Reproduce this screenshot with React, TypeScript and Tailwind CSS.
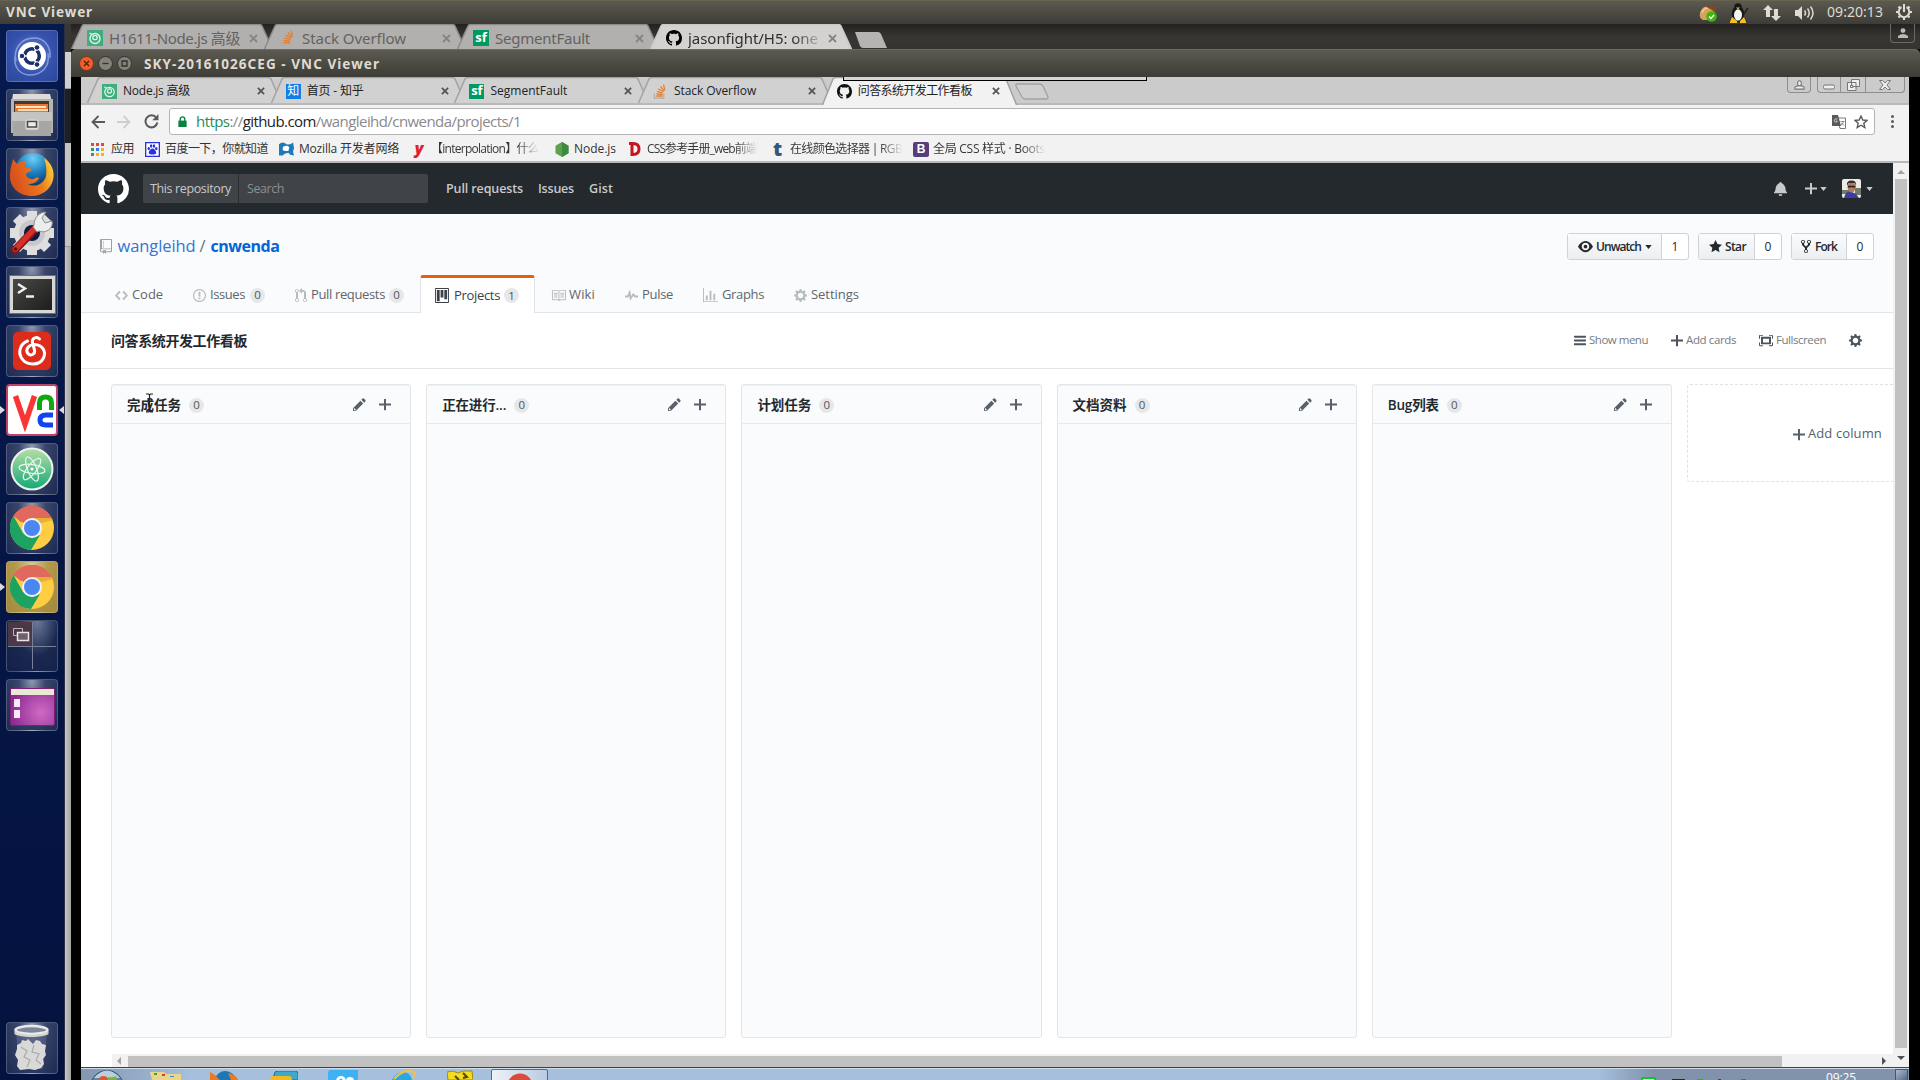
import { useLayoutEffect, useRef, type ReactNode } from "react";

const OCT = {
  github: "M8 0C3.58 0 0 3.58 0 8c0 3.54 2.29 6.53 5.47 7.59.4.07.55-.17.55-.38 0-.19-.01-.82-.01-1.49-2.01.37-2.53-.49-2.69-.94-.09-.23-.48-.94-.82-1.13-.28-.15-.68-.52-.01-.53.63-.01 1.08.58 1.23.82.72 1.21 1.87.87 2.33.66.07-.52.28-.87.51-1.07-1.78-.2-3.64-.89-3.64-3.95 0-.87.31-1.59.82-2.15-.08-.2-.36-1.02.08-2.12 0 0 .67-.21 2.2.82.64-.18 1.32-.27 2-.27.68 0 1.36.09 2 .27 1.53-1.04 2.2-.82 2.2-.82.44 1.1.16 1.92.08 2.12.51.56.82 1.27.82 2.15 0 3.07-1.87 3.75-3.65 3.95.29.25.54.73.54 1.48 0 1.07-.01 1.93-.01 2.2 0 .21.15.46.55.38A8.013 8.013 0 0 0 16 8c0-4.42-3.58-8-8-8z",
  repo: "M4 9H3V8h1v1zm0-3H3v1h1V6zm0-2H3v1h1V4zm0-2H3v1h1V2zm8-1v12c0 .55-.45 1-1 1H6v2l-1.5-1.5L3 16v-2H1c-.55 0-1-.45-1-1V1c0-.55.45-1 1-1h10c.55 0 1 .45 1 1zm-1 10H1v2h2v-1h3v1h5v-2zm0-10H2v9h9V1z",
  code: "M9.5 3L8 4.5 11.5 8 8 11.5 9.5 13 14 8 9.5 3zm-5 0L0 8l4.5 5L6 11.5 2.5 8 6 4.5 4.5 3z",
  issue: "M7 2.3c3.14 0 5.7 2.56 5.7 5.7s-2.56 5.7-5.7 5.7A5.71 5.71 0 0 1 1.3 8c0-3.14 2.56-5.7 5.7-5.7zM7 1C3.14 1 0 4.14 0 8s3.14 7 7 7 7-3.14 7-7-3.14-7-7-7zm1 3H6v5h2V4zm0 6H6v2h2v-2z",
  pr: "M11 11.28V5c-.03-.78-.34-1.47-.94-2.06C9.46 2.35 8.78 2.03 8 2H7V0L4 3l3 3V4h1c.27.02.48.11.69.31.21.2.3.42.31.69v6.28A1.993 1.993 0 0 0 10 15a1.993 1.993 0 0 0 1-3.72zm-1 2.92c-.66 0-1.2-.55-1.2-1.2 0-.65.55-1.2 1.2-1.2.65 0 1.2.55 1.2 1.2 0 .65-.55 1.2-1.2 1.2zM4 3c0-1.11-.89-2-2-2a1.993 1.993 0 0 0-1 3.72v6.56A1.993 1.993 0 0 0 2 15a1.993 1.993 0 0 0 1-3.72V4.72c.59-.34 1-.98 1-1.72zm-.8 10c0 .66-.55 1.2-1.2 1.2-.65 0-1.2-.55-1.2-1.2 0-.65.55-1.2 1.2-1.2.65 0 1.2.55 1.2 1.2zM2 4.2C1.34 4.2.8 3.65.8 3c0-.65.55-1.2 1.2-1.2.65 0 1.2.55 1.2 1.2 0 .65-.55 1.2-1.2 1.2z",
  project: "M10 12h3V2h-3v10zm-4-2h3V2H6v8zm-4 4h3V2H2v12zm-1 1h13V1H1v14zM14 0H1a1 1 0 0 0-1 1v14a1 1 0 0 0 1 1h13a1 1 0 0 0 1-1V1a1 1 0 0 0-1-1z",
  book: "M3 5h4v1H3V5zm0 3h4V7H3v1zm0 2h4V9H3v1zm11-5h-4v1h4V5zm0 2h-4v1h4V7zm0 2h-4v1h4V9zm2-6v9c0 .55-.45 1-1 1H9.5l-1 1-1-1H2c-.55 0-1-.45-1-1V3c0-.55.45-1 1-1h5.5l1 1 1-1H15c.55 0 1 .45 1 1zm-8 .5L7.5 3H2v9h6V3.5zm7-.5H9.5l-.5.5V12h6V3z",
  pulse: "M11.5 8L8.8 5.4 6.6 8.5 5.5 1.6 2.38 8H0v2h3.6l.9-1.8.9 5.4L9 8.5l1.6 1.5H14V8h-2.5z",
  graph: "M16 14v1H0V0h1v14h15zM5 13H3V8h2v5zm4 0H7V3h2v10zm4 0h-2V6h2v7z",
  gear: "M14 8.77v-1.6l-1.94-.64-.45-1.09.88-1.84-1.13-1.13-1.81.91-1.09-.45-.69-1.92h-1.6l-.63 1.94-1.11.45-1.84-.88-1.13 1.13.91 1.81-.45 1.09L0 7.23v1.59l1.94.64.45 1.09-.88 1.84 1.13 1.13 1.81-.91 1.09.45.69 1.92h1.59l.63-1.94 1.11-.45 1.84.88 1.13-1.13-.92-1.81.47-1.09L14 8.75v.02zM7 11c-1.66 0-3-1.34-3-3s1.34-3 3-3 3 1.34 3 3-1.34 3-3 3z",
  pencil: "M0 12v3h3l8-8-3-3-8 8zm3 2H1v-2h1v1h1v1zm10.3-9.3L12 6 9 3l1.3-1.3a.996.996 0 0 1 1.41 0l1.59 1.59c.39.39.39 1.02 0 1.41z",
  plus: "M12 9H7v5H5V9H0V7h5V2h2v5h5v2z",
  bars: "M11.41 9H.59C0 9 0 8.59 0 8c0-.59 0-1 .59-1H11.4c.59 0 .59.41.59 1 0 .59 0 1-.59 1h.01zm0-4H.59C0 5 0 4.59 0 4c0-.59 0-1 .59-1H11.4c.59 0 .59.41.59 1 0 .59 0 1-.59 1h.01zM.59 11H11.4c.59 0 .59.41.59 1 0 .59 0 1-.59 1H.59C0 13 0 12.59 0 12c0-.59 0-1 .59-1z",
  full: "M13 10h1v3c0 .547-.453 1-1 1h-3v-1h3v-3zM1 10H0v3c0 .547.453 1 1 1h3v-1H1v-3zm0-7h3V2H1c-.547 0-1 .453-1 1v3h1V3zm1 1h10v8H2V4zm2 6h6V6H4v4zm6-8v1h3v3h1V3c0-.547-.453-1-1-1h-3z",
  eye: "M8.06 2C3 2 0 8 0 8s3 6 8.06 6C13 14 16 8 16 8s-3-6-7.94-6zM8 12c-2.2 0-4-1.78-4-4 0-2.2 1.8-4 4-4 2.22 0 4 1.8 4 4 0 2.22-1.78 4-4 4zm2-4c0 1.11-.89 2-2 2-1.11 0-2-.89-2-2 0-1.11.89-2 2-2 1.11 0 2 .89 2 2z",
  star: "M14 6l-4.9-.64L7 1 4.9 5.36 0 6l3.6 3.26L2.67 14 7 11.67 11.33 14l-.93-4.74L14 6z",
  fork: "M8 1a1.993 1.993 0 0 0-1 3.72V6L5 8 3 6V4.72A1.993 1.993 0 0 0 2 1a1.993 1.993 0 0 0-1 3.72V6.5l3 3v1.78A1.993 1.993 0 0 0 5 15a1.993 1.993 0 0 0 1-3.72V9.5l3-3V4.72A1.993 1.993 0 0 0 8 1zM2 4.2C1.34 4.2.8 3.65.8 3c0-.65.55-1.2 1.2-1.2.65 0 1.2.55 1.2 1.2 0 .65-.55 1.2-1.2 1.2zm3 10c-.66 0-1.2-.55-1.2-1.2 0-.65.55-1.2 1.2-1.2.65 0 1.2.55 1.2 1.2 0 .65-.55 1.2-1.2 1.2zm3-10c-.66 0-1.2-.55-1.2-1.2 0-.65.55-1.2 1.2-1.2.65 0 1.2.55 1.2 1.2 0 .65-.55 1.2-1.2 1.2z",
  bell: "M14 12v1H0v-1l.73-.58c.77-.77.81-2.55 1.19-4.42C2.69 3.23 6 2 6 2c0-.55.45-1 1-1s1 .45 1 1c0 0 3.39 1.23 4.16 5 .38 1.88.42 3.66 1.19 4.42l.66.58H14zm-7 4c1.11 0 2-.89 2-2H5c0 1.11.89 2 2 2z",
};

function Oct({ name, vw = 16, className }: { name: keyof typeof OCT; vw?: number; className: string }) {
  return (
    <svg viewBox={`0 0 ${vw} 16`} preserveAspectRatio="none" className={`shrink-0 fill-current ${className}`}>
      <path d={OCT[name]} fillRule="evenodd" />
    </svg>
  );
}

/* Text that spaces its letters so that the line takes exactly the width of its box. */
function Fit({ className, children }: { className: string; children: ReactNode }) {
  const ref = useRef<HTMLSpanElement>(null);
  useLayoutEffect(() => {
    const el = ref.current;
    const box = el?.parentElement;
    if (!el || !box) return;
    el.style.letterSpacing = "0px";
    const n = (el.textContent || "").length;
    const gap = (box.getBoundingClientRect().width - el.getBoundingClientRect().width) / n;
    el.style.letterSpacing = `${gap}px`;
  }, []);
  return (
    <span className={`block shrink-0 whitespace-nowrap ${className}`}>
      <span ref={ref} className="inline-block">
        {children}
      </span>
    </span>
  );
}

const Caret = ({ className }: { className: string }) => (
  <svg viewBox="0 0 8 5" className={`shrink-0 fill-current ${className}`}>
    <path d="M0 0h8L4 5z" />
  </svg>
);

/* ---------- favicons ---------- */

const NodeClub = ({ className }: { className: string }) => (
  <svg viewBox="0 0 16 16" className={`shrink-0 ${className}`}>
    <path fill="#3fae7c" d="M0 0h16v16H0z" />
    <circle cx="8" cy="8.500" r="5" fill="none" stroke="#dff3ea" strokeWidth="1.400" />
    <circle cx="8" cy="7.500" r="2.200" fill="none" stroke="#dff3ea" strokeWidth="1.300" />
    <path d="M2.500 3l2.500 1.500" stroke="#dff3ea" strokeWidth="1.200" />
  </svg>
);
const StackO = ({ className }: { className: string }) => (
  <svg viewBox="0 0 16 16" className={`shrink-0 ${className}`} fill="none">
    <path d="M1.500 10.500V15h10v-4.500" stroke="#b9a89a" strokeWidth="1.300" />
    <path d="M3.500 12.800h6.500M3.600 10.500l6.500.7M4.200 7.900l6.200 1.800M5.600 5.100l5.500 3.200M8 2.500l3.900 5M11.200.7l1.400 6" stroke="#e8802f" strokeWidth="1.400" />
  </svg>
);
const Sf = ({ className }: { className: string }) => (
  <span className={`flex shrink-0 items-center justify-center bg-[#009a61] font-['Open_Sans',sans-serif] text-[13px] leading-none font-bold text-white ${className}`}>
    <span className="-mt-px">sf</span>
  </span>
);

/* ---------- host desktop ---------- */

const BAR = "bg-linear-to-b from-[#5c5a50] to-[#3d3c37]";

function TopPanel() {
  return (
    <header className={`flex h-6 shrink-0 items-center border-t border-[#66644f] pl-[6px] ${BAR}`}>
      <Fit className="w-[87px] text-[13.500px] font-bold text-[#dfdbd2]">VNC Viewer</Fit>
      <div className="ml-auto flex items-center pr-[7px] text-[#dfdbd2]">
        <svg viewBox="0 0 20 18" className="mr-[11px] h-[18px] w-5">
          <path d="M2 9c1-4 4-7 8-7s7 3 7 7-2 7-7 7H5c-2-1-4-3-3-7z" fill="#d9a25c" />
          <path d="M4 9c1-3 3-5 6-5" fill="none" stroke="#f2cf97" strokeWidth="1.500" />
          <path d="M6 2c3-2 9-2 12 3l-1 4C15 6 11 4 6 2z" fill="#7b4b25" />
          <path d="M16 3l2.500-2" stroke="#7b4b25" strokeWidth="1.500" />
          <circle cx="13.500" cy="12.500" r="5.300" fill="#43b310" />
          <path d="M11 12.500l2 2 3-3.500" fill="none" stroke="#fff" strokeWidth="1.500" />
        </svg>
        <svg viewBox="0 0 20 20" className="mr-[14px] h-5 w-5">
          <ellipse cx="9" cy="11" rx="6.200" ry="8" fill="#16181c" />
          <circle cx="9" cy="4" r="3.800" fill="#16181c" />
          <ellipse cx="9" cy="12" rx="4" ry="5.800" fill="#f4f4f4" />
          <path d="M7 4.500h4L9 6.500z" fill="#f6b90e" />
          <path d="M1 19l2-5 5 4v2H1zM17 19l-2-5-4 4v2h6z" fill="#f8c21a" />
          <path d="M14 12l5-7" stroke="#222" strokeWidth="1.600" />
        </svg>
        <svg viewBox="0 0 18 18" className="mr-[14px] h-[18px] w-[18px] fill-current">
          <path d="M5 1l5 5H7v7H3V6H0zM13 17l-5-5h3V5h4v7h3z" />
        </svg>
        <svg viewBox="0 0 20 16" className="mr-3 h-4 w-5" fill="none" stroke="currentColor">
          <path d="M0 5h3l4-4v14l-4-4H0z" fill="currentColor" stroke="none" />
          <path d="M9.500 5.500q2 2.500 0 5M12.500 3.500q3.500 4.500 0 9M15.500 1.500q5 6.500 0 13" strokeWidth="1.500" />
        </svg>
        <Fit className="mb-[2px] w-14 text-[14px] leading-[22px]">09:20:13</Fit>
        <svg viewBox="0 0 18 18" className="mb-px ml-3 h-[18px] w-[18px]" fill="none" stroke="currentColor">
          <path d="M6.500 4.200a5.300 5.300 0 1 0 5 0" strokeWidth="2" />
          <path d="M9 1v8" strokeWidth="2" />
          <path d="M3.500 3.500l1.700 1.700M14.500 3.500l-1.700 1.700M1 9h2.500M17 9h-2.500M3.500 14.500l1.600-1.600M14.500 14.500l-1.600-1.600M9 17v-2.500" strokeWidth="2.200" />
        </svg>
      </div>
    </header>
  );
}

const gloss = "bg-[radial-gradient(ellipse_at_50%_0%,#8f98ae_0%,#39456b_38%,#1d2b52_100%)]";

function Tile({ children, className = gloss, left, right }: { children: ReactNode; className?: string; left?: boolean; right?: boolean }) {
  return (
    <div className="relative flex h-[52px] w-full shrink-0 justify-center">
      {left && <i className="absolute top-[22px] left-0 border-y-[4px] border-l-[5px] border-y-transparent border-l-[#d8dae2]" />}
      {right && <i className="absolute top-[22px] right-0 border-y-[4px] border-r-[5px] border-y-transparent border-r-[#d8dae2]" />}
      <div className={`flex h-[52px] w-[52px] items-center justify-center overflow-hidden rounded-[4px] border border-white/20 ${className}`}>{children}</div>
    </div>
  );
}

const Chrome = () => (
  <svg viewBox="0 0 44 44" className="h-11 w-11">
    <circle cx="22" cy="22" r="22" fill="#ffcd42" />
    <path d="M22 22L3.500 10A22 22 0 0 1 41.500 12H22z" fill="#dd5144" />
    <path d="M22 0A22 22 0 0 1 41.500 12H22L11 16 3.500 10A22 22 0 0 1 22 0z" fill="#e0685d" />
    <path d="M3.500 10L13 27l9 5 8-3-9 15A22 22 0 0 1 3.500 10z" fill="#1da261" />
    <path d="M22 12h20l1 2-12 3z" fill="#c9952c" opacity=".5" />
    <circle cx="22" cy="22" r="10" fill="#f1f1f1" />
    <circle cx="22" cy="22" r="8" fill="#4b87f3" />
  </svg>
);

const Firefox = ({ className }: { className: string }) => (
  <svg viewBox="0 0 46 46" className={className}>
    <defs>
      <radialGradient id="ffglobe" cx=".5" cy=".15" r=".8">
        <stop offset="0" stopColor="#6fd0f4" />
        <stop offset=".5" stopColor="#1f7fc0" />
        <stop offset="1" stopColor="#08335f" />
      </radialGradient>
      <linearGradient id="fffox" x1="0" x2="1" y1=".3" y2="0">
        <stop offset="0" stopColor="#d8501c" />
        <stop offset=".55" stopColor="#ee7a1f" />
        <stop offset="1" stopColor="#fbe23c" />
      </linearGradient>
    </defs>
    <circle cx="24" cy="20" r="18" fill="url(#ffglobe)" />
    <path d="M4 8l4 5c3-3 7-4 10-3-2 2-3 4-2 6 3 0 5 1 7 3-2 2-5 2-6 4 0 3 3 5 7 5 2 0 4-3 6-1-2 5-7 6-11 6 7 4 16 0 18-8 1-6 0-12-2-18 8 5 11 14 9 22-2 9-11 16-21 16C10 45 0 36 1 23 1 17 3 13 4 8z" fill="url(#fffox)" />
  </svg>
);

function Launcher() {
  return (
    <aside className="flex w-[65px] shrink-0 flex-col gap-[7px] border-r border-[#2a2f45] bg-[#061543] bg-linear-to-b from-[#071a4d] to-[#04123f] pt-[6px] pb-[6px]">
      <Tile className="bg-[radial-gradient(circle_at_50%_45%,#6f88d4_0%,#3552ae_55%,#2c4698_100%)]">
        <svg viewBox="0 0 50 50" className="h-[50px] w-[50px]" fill="none">
          <path d="M9 30C6 18 14 7 27 7c10 0 17 8 16 20M41 22c2 14-6 22-19 22C12 43 7 36 8 26" stroke="#a9b9e8" strokeWidth="1.500" opacity=".7" />
          <circle cx="25" cy="25" r="14" fill="#fff" />
          <circle cx="25" cy="25" r="7.300" stroke="#1b2f6b" strokeWidth="3.600" />
          <path d="M25 25l-12 0M25 25l6-10M25 25l6 10" stroke="#fff" strokeWidth="1.500" />
          <circle cx="25" cy="25" r="5" fill="#fff" />
          <circle cx="15" cy="25" r="2.800" fill="#1b2f6b" stroke="#fff" />
          <circle cx="30" cy="16.500" r="2.800" fill="#1b2f6b" stroke="#fff" />
          <circle cx="30" cy="33.500" r="2.800" fill="#1b2f6b" stroke="#fff" />
        </svg>
      </Tile>
      <Tile>
        <svg viewBox="0 0 50 50" className="h-[50px] w-[50px]">
          <path d="M6 4h37l3 12H4z" fill="#dcdcda" />
          <path d="M4 9h42v34H4z" fill="#b4b4b2" />
          <path d="M7 11h35v13H7z" fill="#46362d" />
          <path d="M8 14h33v8H8z" fill="#e8772e" />
          <path d="M9 16h30v2H9z" fill="#fbe3c8" />
          <path d="M11 19h30v2H11z" fill="#fbd9b5" />
          <path d="M5 22h40l-1 24H6z" fill="#a6a6a4" />
          <path d="M5 22h40v9H5z" fill="#c4c4c2" />
          <rect x="18.500" y="29.500" width="13" height="10" rx="2" fill="#dcdcda" stroke="#cfcfcd" />
          <path d="M20.500 31.500h9v5.500h-9z" fill="#eee" stroke="#4b4b4b" strokeWidth="1.600" />
        </svg>
      </Tile>
      <Tile>
        <Firefox className="h-[46px] w-[46px]" />
      </Tile>
      <Tile>
        <svg viewBox="0 0 50 50" className="h-[50px] w-[50px]">
          <g fill="#dedede">
            <circle cx="25" cy="25" r="18" />
            <path d="M20 3h10v44H20zM3 20h44v10H3z" />
            <path d="M20 3h10v44H20zM3 20h44v10H3z" transform="rotate(45 25 25)" />
          </g>
          <circle cx="25" cy="25" r="13" fill="#c6c8ca" />
          <circle cx="25" cy="25" r="8" fill="#0a1a48" />
          <path d="M8 42L29 20" stroke="#8e1512" strokeWidth="8" strokeLinecap="round" />
          <path d="M8.500 41L28.500 19.500" stroke="#d3312b" strokeWidth="5.500" strokeLinecap="round" />
          <path d="M27 17c0-7 5-13 12-13l-4 6 3 5 7-2c2 7-6 13-13 10l-2 1-4-5z" fill="#eceded" stroke="#8e8e8e" />
          <circle cx="8.500" cy="41" r="1.800" fill="#5f0d0b" />
        </svg>
      </Tile>
      <Tile>
        <div className="mt-[5px] flex h-[37px] w-[45px] items-start border-[3px] border-[#d7d7d5] bg-linear-to-br from-[#4a4a48] to-[#1d1d1c] outline-1 outline-[#6d6d6d]">
          <svg viewBox="0 0 39 31" className="h-[31px] w-[39px]" fill="none" stroke="#eee" strokeWidth="2.500">
            <path d="M5 5l7 4.500L5 14M13 17.500h8" />
          </svg>
        </div>
      </Tile>
      <Tile>
        <div className="flex h-[38px] w-[38px] items-center justify-center rounded-[5px] bg-[#dd2b1c]">
          <svg viewBox="0 0 38 38" className="h-[38px] w-[38px]" fill="none" stroke="#fff" strokeWidth="3" strokeLinecap="round">
            <path d="M14.500 9C7 12 5 20 8.500 26c5 8 18 8 22 0 3-7-1-13-9-13.500-6 0-9 5-7 8.500 3 4 8 1 7-3L19.500 11c-1-5 4-7 7-4" />
          </svg>
        </div>
      </Tile>
      <Tile left right className="border-[2px]! border-[#c0446a]! bg-white">
        <svg viewBox="0 0 48 48" className="h-12 w-12" fill="none">
          <path d="M7.500 10l9.500 28 9.500-28" stroke="#fb3434" strokeWidth="5.500" />
          <path d="M31.500 24V17q0-6 6-6t6 6v7" stroke="#0fa80f" strokeWidth="5" />
          <path d="M45 29h-7q-6 0-6 5t6 5h7" stroke="#0d45f2" strokeWidth="5" />
        </svg>
      </Tile>
      <Tile>
        <svg viewBox="0 0 44 44" className="h-11 w-11" fill="none">
          <defs>
            <linearGradient id="atom" x2="0" y2="1">
              <stop stopColor="#b6dfa6" />
              <stop offset="1" stopColor="#12a877" />
            </linearGradient>
          </defs>
          <circle cx="22" cy="22" r="20.500" fill="url(#atom)" stroke="#eef1ee" strokeWidth="2" />
          <g stroke="#e9f7ec" strokeWidth="1.200">
            <ellipse cx="22" cy="22" rx="13" ry="4.500" transform="rotate(8 22 22)" />
            <ellipse cx="22" cy="22" rx="13" ry="4.500" transform="rotate(68 22 22)" />
            <ellipse cx="22" cy="22" rx="13" ry="4.500" transform="rotate(128 22 22)" />
          </g>
          <circle cx="22" cy="22" r="1.600" fill="#fff" />
        </svg>
      </Tile>
      <Tile>
        <Chrome />
      </Tile>
      <Tile left className="bg-[radial-gradient(ellipse_at_50%_0%,#d3c894_0%,#b49a4c_45%,#a4893c_100%)]">
        <Chrome />
      </Tile>
      <Tile className="bg-[radial-gradient(ellipse_at_60%_0%,#6f7a99_0%,#1a2850_50%,#132047_100%)]">
        <svg viewBox="0 0 50 50" className="h-[50px] w-[50px]" fill="none">
          <path d="M1 1h24v24H1z" fill="#4a3848" />
          <path d="M25.500 1v47M1 25.500h48" stroke="#7a8098" />
          <path d="M6.500 7.500h9v7h-9z" stroke="#b9b2b8" />
          <path d="M10.500 11.500h11v8h-11z" fill="#6f5f6c" stroke="#e8e4e8" strokeWidth="1.500" />
        </svg>
      </Tile>
      <Tile>
        <div className="mt-[4px] h-[38px] w-[45px] rounded-[2px] border border-[#7b1f78] bg-[radial-gradient(circle_at_70%_65%,#cf6bc4,#8c2a92_80%)]">
          <div className="h-[6px] bg-[#e9e8d2]" />
          <div className="mt-1 ml-[3px] flex flex-col gap-[3px]">
            <i className="h-2 w-[6px] bg-white/90" />
            <i className="h-2 w-[6px] bg-white/90" />
          </div>
        </div>
      </Tile>
      <div className="mt-auto">
        <Tile>
          <svg viewBox="0 0 50 50" className="h-[50px] w-[50px]">
            <path d="M9 10l4 36h23l4-36z" fill="#5b678a" opacity=".6" />
            <path d="M10 22l4-2 1-3 4 1 2-2 3 3 2 2 3-4 4 1 2 3 4 1-1 6 1 4-3 4 1 5-3 4-6 2-6-1-9 1-3-4 1-6-3-5 2-6z" fill="#d9d9d9" />
            <path d="M14 24l6 4-3 6 6 3-3 7M27 22l-2 7 7 2-3 6 5 4" fill="none" stroke="#aaa" strokeWidth="1.200" />
            <ellipse cx="24.500" cy="7" rx="16" ry="4" fill="#7d859c" stroke="#e9e9e6" strokeWidth="2.500" />
            <path d="M7.500 8c4 5 30 5 34 0v3c-5 4-29 4-34 0z" fill="#d4d4d1" />
          </svg>
        </Tile>
      </div>
    </aside>
  );
}

/* A browser tab's slanted outline, drawn behind its caption. */
function TabShape({ fill, line, w, h, slant }: { fill: string; line: string; w: number; h: number; slant: number }) {
  return (
    <svg viewBox={`0 0 ${w} ${h}`} className="absolute inset-0 h-full w-full" preserveAspectRatio="none">
      <path d={`M0 ${h + 1}L${slant} 2q1-1.500 3-1.500H${w - slant - 3}q2 0 3 1.500L${w} ${h + 1}`} fill={fill} stroke={line} strokeWidth="1.500" />
    </svg>
  );
}

function HostTab({ icon, title, fit, active }: { icon: ReactNode; title: string; fit: string; active?: boolean }) {
  return (
    <div className={`relative -mr-[9px] flex h-[25px] w-[202px] shrink-0 items-center ${active ? "z-10 text-[#3b3a38]" : "text-[#636260]"}`}>
      <TabShape fill={active ? "#d3d2d0" : "#b1b0ae"} line={active ? "#c9c8c6" : "#8c8b89"} w={202} h={25} slant={11} />
      <div className="relative flex w-full items-center pt-[3px] pl-4">
        {icon}
        <Fit className={`ml-[6px] text-[15px] leading-5 ${fit}`}>{title}</Fit>
        <svg viewBox="0 0 9 9" className="mr-[15px] ml-auto h-[9px] w-[9px] stroke-[#858482]" strokeWidth="1.800">
          <path d="M1 1l7 7M8 1L1 8" />
        </svg>
      </div>
    </div>
  );
}

function HostTabs() {
  return (
    <div className="flex h-[25px] shrink-0 bg-linear-to-b from-[#232220] via-[#373632] to-[#353430]">
      <HostTab icon={<NodeClub className="h-4 w-4" />} title="H1611-Node.js 高级" fit="w-[131px]" />
      <HostTab icon={<StackO className="h-4 w-4" />} title="Stack Overflow" fit="w-[104px]" />
      <HostTab icon={<Sf className="h-4 w-4" />} title="SegmentFault" fit="w-[95px]" />
      <HostTab active icon={<Oct name="github" className="h-4 w-4 text-black" />} title="jasonfight/H5: one" fit="w-[130px] bg-linear-to-r from-[#2b2b2b] from-80% to-[#aaa] bg-clip-text text-transparent" />
      <svg viewBox="0 0 33 16" className="mt-2 ml-[11px] h-4 w-[33px]">
        <path d="M1 0h23q2 0 3 2l6 14H9q-2 0-3-2z" fill="#b5b4b2" />
      </svg>
      <div className="mr-[5px] ml-auto flex h-[19px] w-[25px] items-center justify-center rounded-b-[4px] border border-t-0 border-[#6a6964]">
        <svg viewBox="0 0 10 10" className="h-[10px] w-[10px] fill-[#bcbbb9]">
          <circle cx="5" cy="2.600" r="2.400" />
          <path d="M0 10V8q5-4 10 0v2z" />
        </svg>
      </div>
    </div>
  );
}

function VncTitle() {
  return (
    <div className={`flex h-7 shrink-0 items-center gap-[4px] rounded-t-[5px] border-t border-[#6b6a60] pl-[8px] ${BAR}`}>
      <svg viewBox="0 0 15 15" className="h-[15px] w-[15px]">
        <circle cx="7.500" cy="7.500" r="7" fill="#ee5f2c" stroke="#7e3319" />
        <path d="M5 5l5 5M10 5l-5 5" stroke="#4b2110" strokeWidth="1.300" />
      </svg>
      <svg viewBox="0 0 15 15" className="h-[15px] w-[15px]">
        <circle cx="7.500" cy="7.500" r="7" fill="#84827a" stroke="#33322e" />
        <path d="M4.500 7.500h6" stroke="#33322e" strokeWidth="1.300" />
      </svg>
      <svg viewBox="0 0 15 15" className="h-[15px] w-[15px]">
        <circle cx="7.500" cy="7.500" r="7" fill="#84827a" stroke="#33322e" />
        <path d="M5 5h5v5H5z" fill="none" stroke="#33322e" strokeWidth="1.300" />
      </svg>
      <Fit className="mt-[2px] ml-[8px] w-[236px] text-[13.500px] font-bold text-[#dfdbd2]">SKY-20161026CEG - VNC Viewer</Fit>
    </div>
  );
}

/* ---------- remote browser ---------- */

function RemoteTab({ icon, title, fit, active }: { icon: ReactNode; title: string; fit: string; active?: boolean }) {
  return (
    <div className={`relative mr-[-11.300px] flex h-[26px] w-[195px] shrink-0 items-center text-[#222] ${active ? "z-10 h-7!" : ""}`}>
      <TabShape fill={active ? "#f2f2f2" : "#d1d1d1"} line="#a2a2a2" w={195} h={active ? 28 : 26} slant={11} />
      <div className={`relative flex w-full items-center pl-[15px] ${active ? "" : "pt-[2px]"}`}>
        {icon}
        <Fit className={`ml-[6px] text-[12px] leading-5 ${fit}`}>{title}</Fit>
        <svg viewBox="0 0 9 9" className="mr-[17px] ml-auto h-2 w-2 stroke-[#555]" strokeWidth="2">
          <path d="M1 1l7 7M8 1L1 8" />
        </svg>
      </div>
    </div>
  );
}

const WinBtn = ({ className, children }: { className: string; children: ReactNode }) => (
  <span className={`flex h-4 items-center justify-center border-[#8e8e8e] ${className}`}>{children}</span>
);

function RemoteTabs() {
  return (
    <div className="relative flex h-7 shrink-0 bg-[#cbcbcb] pl-[6px] shadow-[inset_0_-2px_0_#b9b9b9]">
      <RemoteTab icon={<NodeClub className="h-[15px] w-[15px]" />} title="Node.js 高级" fit="w-[67px]" />
      <RemoteTab
        icon={<span className="flex h-[15px] w-[15px] shrink-0 items-center justify-center bg-[#0f7fe6] text-[12px] leading-none text-white">知</span>}
        title="首页 - 知乎"
        fit="w-[57px]"
      />
      <RemoteTab icon={<Sf className="h-[15px] w-[15px]" />} title="SegmentFault" fit="w-[77px]" />
      <RemoteTab icon={<StackO className="h-[15px] w-[15px]" />} title="Stack Overflow" fit="w-[82px]" />
      <RemoteTab active icon={<Oct name="github" className="h-[15px] w-[15px] text-[#111]" />} title="问答系统开发工作看板" fit="w-[114px]" />
      <svg viewBox="0 0 34 17" className="mt-[6px] ml-[9px] h-[17px] w-[34px]">
        <path d="M2 1h22q3 0 4 2l5 11q0 2-2 2H10q-2 0-3-2L1 3q-.5-2 1-2z" fill="#cfcfcf" stroke="#a2a2a2" strokeWidth="1.300" />
      </svg>
      <div className="absolute top-0 left-[762px] z-20 h-1 w-[304px] border border-t-0 border-black bg-[#d6d6d6]" />
      <div className="mr-1 ml-auto flex">
        <WinBtn className="mr-[6px] w-6 rounded-b-[4px] border-x border-b">
          <svg viewBox="0 0 12 12" className="h-[11px] w-[11px] fill-[#eee] stroke-[#777]" strokeWidth="1.200">
            <path d="M1 11V9l2.500-1.500h5L11 9v2zM4 4.500a2 2.600 0 0 1 4 0q0 3-2 3t-2-3z" />
          </svg>
        </WinBtn>
        <WinBtn className="w-6 rounded-bl-[4px] border-x border-b">
          <svg viewBox="0 0 12 6" className="mt-1 h-[6px] w-3 fill-[#eee] stroke-[#777]">
            <rect x=".5" y="1" width="11" height="4" rx="1.500" />
          </svg>
        </WinBtn>
        <WinBtn className="w-6 border-b">
          <svg viewBox="0 0 13 12" className="h-3 w-[13px] fill-[#eee] stroke-[#777]">
            <path d="M4.500.5h8v7h-8zM.5 3.500h8.500v8H.5z" />
            <path d="M3.500 6.500h2.500v2H3.500z" />
          </svg>
        </WinBtn>
        <WinBtn className="w-10 rounded-br-[4px] border-x border-b">
          <svg viewBox="0 0 12 10" className="h-[10px] w-3 fill-[#eee] stroke-[#777]">
            <path d="M.5.5h3L6 3 8.500.5h3L8 5l3.500 4.500h-3L6 7 3.500 9.500h-3L4 5z" />
          </svg>
        </WinBtn>
      </div>
    </div>
  );
}

function Toolbar() {
  return (
    <div className="flex h-8 shrink-0 items-center bg-[#f2f2f2] pt-px pl-[10px] text-[#5a5a5a]">
      <svg viewBox="0 0 14 14" className="mr-3 h-[14px] w-[14px]" fill="none" stroke="currentColor" strokeWidth="1.800">
        <path d="M14 7H2M7.500 1L1.500 7l6 6" />
      </svg>
      <svg viewBox="0 0 14 14" className="mr-[13px] h-[14px] w-[14px]" fill="none" stroke="#cfcfcf" strokeWidth="1.800">
        <path d="M0 7h12M6.500 1l6 6-6 6" />
      </svg>
      <svg viewBox="0 0 14 14" className="mr-[10px] h-[15px] w-[15px]" fill="none" stroke="currentColor" strokeWidth="1.900">
        <path d="M11.500 3.500A5.600 5.600 0 1 0 12.500 8" />
        <path d="M13.500 0v5.800H7.700z" fill="currentColor" stroke="none" />
      </svg>
      <div className="flex h-[27px] w-[1706px] items-center rounded-[3px] border border-[#b4b4b4] bg-white pl-[8px]">
        <svg viewBox="0 0 9 12" className="mr-[9px] h-[11px] w-[9px] fill-[#0b8043]">
          <path d="M0 5h9v7H0z" />
          <path d="M2 6V3.500a2.500 2.500 0 0 1 5 0V6" fill="none" stroke="#0b8043" strokeWidth="1.500" />
        </svg>
        <Fit className="w-[325px] text-[15px] text-[#8a8a8a]">
          <span className="text-[#2a8a57]">https</span>://<span className="text-[#222]">github.com</span>/wangleihd/cnwenda/projects/1
        </Fit>
        <svg viewBox="0 0 14 14" className="mr-[8px] ml-auto h-[14px] w-[14px]">
          <path d="M5.500 3h8v10.500H8z" fill="#fff" stroke="#7a7a7a" />
          <path d="M0 0h6l3 11H0z" fill="#5a5a5a" />
          <path d="M5.500 4H3.400a1.600 1.600 0 1 0 2 2H4" fill="none" stroke="#ddd" strokeWidth=".9" />
          <path d="M8.500 6.500h4M11.500 7l-2.500 3.500M9.500 8l2.500 2.500" fill="none" stroke="#7a7a7a" strokeWidth=".9" />
        </svg>
        <svg viewBox="0 0 14 14" className="mr-[6px] h-[14px] w-[14px]" fill="none" stroke="currentColor" strokeWidth="1.400">
          <path d="M7 1l1.800 4 4.200.4-3.200 2.800 1 4.300L7 10.200l-3.800 2.300 1-4.300L1 5.400 5.200 5z" />
        </svg>
      </div>
      <div className="ml-4 flex flex-col gap-[2px]">
        <i className="h-[3px] w-[3px] rounded-full bg-[#5a5a5a]" />
        <i className="h-[3px] w-[3px] rounded-full bg-[#5a5a5a]" />
        <i className="h-[3px] w-[3px] rounded-full bg-[#5a5a5a]" />
      </div>
    </div>
  );
}

const FADE = "bg-linear-to-r from-[#333] from-80% to-[#eee] bg-clip-text text-transparent";

function Bookmarks() {
  return (
    <div className="flex h-[26px] shrink-0 items-center border-b-2 border-[#b8b8b8] bg-[#f2f2f2] pl-[10px] text-[12px] leading-5 text-[#333]">
      <svg viewBox="0 0 13 13" className="h-[13px] w-[13px]">
        <path d="M0 0h3v3H0zM5 0h3v3H5zM10 0h3v3h-3z" fill="#e8453c" />
        <path d="M0 5h3v3H0z" fill="#2f9e52" />
        <path d="M5 5h3v3H5z" fill="#3a7af0" />
        <path d="M10 5h3v3h-3z" fill="#f5b21a" />
        <path d="M0 10h3v3H0z" fill="#2f9e52" />
        <path d="M5 10h3v3H5zM10 10h3v3h-3z" fill="#f5b21a" />
      </svg>
      <Fit className="ml-[7px] w-[23px]">应用</Fit>
      <svg viewBox="0 0 16 16" className="ml-[11px] h-[15px] w-[15px]">
        <path d="M.7.7h14.600v14.600H.7z" fill="#fff" stroke="#2932e1" strokeWidth="1.400" />
        <g fill="#2932e1">
          <ellipse cx="4" cy="7" rx="1.300" ry="1.800" />
          <ellipse cx="6.500" cy="4.200" rx="1.300" ry="1.800" />
          <ellipse cx="9.600" cy="4.200" rx="1.300" ry="1.800" />
          <ellipse cx="12" cy="7" rx="1.300" ry="1.800" />
          <path d="M8 7c2 0 4 3 4 4.500s-1.500 2-4 1.700c-2.500.3-4-.2-4-1.700S6 7 8 7z" />
        </g>
      </svg>
      <Fit className="ml-[5px] w-[103px]">百度一下，你就知道</Fit>
      <svg viewBox="0 0 16 14" className="ml-[11px] h-[14px] w-[15px]">
        <path d="M0 2q4-4 8 0 4 1 7-2l1 6-1 4 1 4-4-1-2-2-4 1-2 2H0z" fill="#1c7bb8" />
        <path d="M4 5q4-3 7 0l-1 4H6l-2-1z" fill="#fff" />
      </svg>
      <Fit className="ml-[5px] w-[100px]">Mozilla 开发者网络</Fit>
      <span className="mb-[3px] ml-[14px] w-3 text-center font-['Open_Sans',sans-serif] text-[16px] leading-4 font-extrabold text-[#e0202c] italic">y</span>
      <Fit className={`ml-[6px] w-[108px] ${FADE}`}>【interpolation】什么</Fit>
      <svg viewBox="0 0 14 15" className="ml-[16px] h-[15px] w-[14px]">
        <path d="M7 0l6.500 3.700v7.500L7 15 .5 11.200V3.700z" fill="#5fa04e" />
        <path d="M7 0l6.500 3.700v7.500L7 15z" fill="#3f8a3f" />
      </svg>
      <Fit className="ml-[5px] w-[42px]">Node.js</Fit>
      <svg viewBox="0 0 12 14" className="ml-[13px] h-[14px] w-3" fill="none" stroke="#c4161c" strokeWidth="3">
        <path d="M3 1.500v11h1q6 0 6-5.500T4 1.500H0" />
      </svg>
      <Fit className={`ml-[6px] w-[110px] ${FADE}`}>CSS参考手册_web前端</Fit>
      <span className="mb-px ml-[15px] w-[11px] text-center font-['Open_Sans',sans-serif] text-[20px] leading-4 font-extrabold text-[#36557a]">t</span>
      <Fit className={`ml-[7px] w-[112px] ${FADE}`}>在线颜色选择器 | RGB</Fit>
      <span className="ml-[11px] flex h-[15px] w-4 items-center justify-center rounded-[2px] bg-[#563d7c] font-['Liberation_Sans',sans-serif] text-[12px] leading-none font-bold text-white">B</span>
      <Fit className={`ml-[4px] w-[112px] ${FADE}`}>全局 CSS 样式 · Boots</Fit>
    </div>
  );
}

function GithubHeader() {
  return (
    <div className="flex h-[51px] shrink-0 items-center bg-[#24292e] pl-[17px] text-[#c8c9cb]">
      <Oct name="github" className="h-[30px] w-[31px] text-white" />
      <div className="ml-[14px] flex h-[29px] w-[285px] items-center rounded-[2px] bg-[#404448] text-[12.500px]">
        <div className="flex h-full w-[96px] items-center border-r border-[#2a2f34] pt-[2px] pl-[7px]">
          <Fit className="w-[81px]">This repository</Fit>
        </div>
        <Fit className="mt-[2px] ml-[8px] w-[37px] text-[#8c8f92]">Search</Fit>
      </div>
      <div className="flex gap-[15px] pt-[2px] pl-[18px] text-[12.500px] font-semibold">
        <Fit className="w-[77px]">Pull requests</Fit>
        <Fit className="w-[36px]">Issues</Fit>
        <Fit className="w-6">Gist</Fit>
      </div>
      <div className="ml-auto flex items-center pr-[20px]">
        <Oct name="bell" vw={14} className="h-[15px] w-[13px]" />
        <Oct name="plus" vw={12} className="ml-[18px] h-[15px] w-3" />
        <Caret className="ml-[3px] h-1 w-[7px]" />
        <svg viewBox="0 0 19 19" className="ml-[15px] h-[19px] w-[19px] rounded-[2px]">
          <path d="M0 0h19v19H0z" fill="#ecebe8" />
          <path d="M0 11h7v4H0zM13 9h6v7h-6z" fill="#6f7a68" />
          <path d="M2 19q1-6 6-7l6 3 3 4z" fill="#3a3e9e" />
          <ellipse cx="9.500" cy="8" rx="4" ry="5.500" fill="#b07c60" />
          <path d="M5 7Q4 1.500 9.500 1.500T14 7l-1-3H6.500z" fill="#3a2b26" />
          <path d="M6 6.800h7.500v1.700h-3L9.700 8l-.7.500H6z" fill="#2c2220" />
        </svg>
        <Caret className="ml-[5px] h-1 w-[7px]" />
      </div>
    </div>
  );
}

function CountBtn({ icon, label, fit, count, main, caret }: { icon: ReactNode; label: string; fit: string; count: string; main: string; caret?: boolean }) {
  return (
    <div className="flex h-[27px] rounded-[3px] border border-[#d0d2d5] bg-white text-[12px] text-[#24292e]">
      <div className={`flex items-center border-r border-[#d0d2d5] bg-linear-to-b from-[#fafbfc] to-[#eceff2] ${main}`}>
        {icon}
        <Fit className={`font-semibold ${fit}`}>{label}</Fit>
        {caret && <Caret className="ml-[4px] h-1 w-[7px]" />}
      </div>
      <span className="flex w-[26px] items-center justify-center">{count}</span>
    </div>
  );
}

const Badge = ({ n, className = "" }: { n: string; className?: string }) => (
  <span className={`flex h-[15px] w-[15px] shrink-0 items-center justify-center rounded-full bg-[#e6e7e9] text-[11.500px] leading-none font-medium text-[#50565c] ${className}`}>{n}</span>
);

function RepoHead() {
  return (
    <div className="flex h-[99px] shrink-0 flex-col justify-between bg-[#fafbfc]">
      <div className="flex items-center justify-between pt-[19px] pr-[19px] pl-[18.500px]">
        <div className="flex items-center">
          <Oct name="repo" vw={12} className="mb-px h-[15px] w-3 text-[#9ea1a5]" />
          <Fit className="mb-[2px] ml-[6px] w-[78px] text-[16.500px] leading-6 text-[#3374d4]">wangleihd</Fit>
          <Fit className="mb-[2px] ml-[4px] w-[8px] text-[16.500px] leading-6 text-[#6a737d]">/</Fit>
          <Fit className="mb-[2px] ml-[3px] w-[69px] text-[16px] leading-6 font-bold text-[#0366d6]">cnwenda</Fit>
        </div>
        <div className="flex gap-[9px]">
          <CountBtn main="w-[94px] pl-[10px]" icon={<Oct name="eye" className="mr-[3px] h-[15px] w-[15px]" />} label="Unwatch" fit="w-[45px]" count="1" caret />
          <CountBtn main="w-[56px] pl-[10px]" icon={<Oct name="star" vw={14} className="mr-[3px] h-[15px] w-[13px]" />} label="Star" fit="w-[21px]" count="0" />
          <CountBtn main="w-[55px] pl-[9px]" icon={<Oct name="fork" vw={10} className="mr-[4px] h-[15px] w-[10px]" />} label="Fork" fit="w-[22px]" count="0" />
        </div>
      </div>
      <nav className="flex h-[38px] items-stretch text-[13px] text-[#5f666d] *:items-center">
        <div className="flex w-[339px] border-b border-[#e1e4e8] pt-[3px] pl-[34px]">
          <Oct name="code" vw={14} className="h-[15px] w-[13px] text-[#b8bbbe]" />
          <Fit className="ml-[4px] w-[31px]">Code</Fit>
          <Oct name="issue" vw={14} className="ml-[30px] h-[15px] w-[13px] text-[#b8bbbe]" />
          <Fit className="ml-[4px] w-[35px]">Issues</Fit>
          <Badge n="0" className="ml-[5px]" />
          <Oct name="pr" vw={12} className="ml-[30px] h-[15px] w-3 text-[#b8bbbe]" />
          <Fit className="ml-[4px] w-[74px]">Pull requests</Fit>
          <Badge n="0" className="ml-[4px]" />
        </div>
        <div className="flex w-[115px] rounded-t-[3px] border-x border-t-[3px] border-x-[#e1e4e8] border-t-[#e36209] bg-white pl-[14px] text-[#3b4147]">
          <Oct name="project" vw={15} className="h-[15px] w-[14px]" />
          <Fit className="ml-[5px] w-[46px]">Projects</Fit>
          <Badge n="1" className="ml-[4px]" />
        </div>
        <div className="flex flex-1 border-b border-[#e1e4e8] pt-[3px] pl-[16px]">
          <Oct name="book" className="h-[15px] w-[15px] text-[#b8bbbe]" />
          <Fit className="ml-[3px] w-[26px]">Wiki</Fit>
          <Oct name="pulse" vw={14} className="ml-[30px] h-[15px] w-[13px] text-[#b8bbbe]" />
          <Fit className="ml-[4px] w-[31px]">Pulse</Fit>
          <Oct name="graph" className="ml-[30px] h-[15px] w-[15px] text-[#b8bbbe]" />
          <Fit className="ml-[4px] w-[42px]">Graphs</Fit>
          <Oct name="gear" vw={14} className="ml-[30px] h-[15px] w-[13px] text-[#b8bbbe]" />
          <Fit className="ml-[4px] w-[48px]">Settings</Fit>
        </div>
      </nav>
    </div>
  );
}

function ProjectBar() {
  return (
    <div className="flex h-14 shrink-0 items-center border-b border-[#e1e4e8] bg-white pb-px pl-[30px] text-[11.500px] text-[#747b82]">
      <Fit className="w-[136px] text-[14px] font-bold text-[#24292e]">问答系统开发工作看板</Fit>
      <div className="ml-auto flex items-center pr-[31px]">
        <Oct name="bars" vw={12} className="h-[15px] w-3 text-[#4d545b]" />
        <Fit className="ml-[3px] w-[59px]">Show menu</Fit>
        <Oct name="plus" vw={12} className="ml-[23px] h-[15px] w-3 text-[#4d545b]" />
        <Fit className="ml-[3px] w-[50px]">Add cards</Fit>
        <Oct name="full" vw={14} className="ml-[23px] h-[15px] w-[14px] text-[#4d545b]" />
        <Fit className="ml-[3px] w-[50px]">Fullscreen</Fit>
        <Oct name="gear" vw={14} className="ml-[23px] h-[15px] w-[13px] text-[#4d545b]" />
      </div>
    </div>
  );
}

const COLUMNS = [
  { title: "完成任务", fit: "w-[54px]" },
  { title: "正在进行...", fit: "w-[64px]" },
  { title: "计划任务", fit: "w-[54px]" },
  { title: "文档资料", fit: "w-[54px]" },
  { title: "Bug列表", fit: "w-[51px]" },
];

function Board() {
  return (
    <div className="relative flex min-h-0 flex-1 gap-[15px] overflow-hidden bg-white pt-[15px] pb-4 pl-[30px]">
      {COLUMNS.map((c) => (
        <section key={c.title} className="w-[300.200px] shrink-0 rounded-[3px] border border-[#e3e6e9] bg-[#fafbfc] shadow-[inset_0_1px_0_#f0f1f3]">
          <div className="flex h-[39px] items-center border-b border-[#e7e9ec] pr-[19px] pl-[15px]">
            <Fit className={`mt-[2px] text-[13.500px] leading-5 font-semibold text-[#24292e] ${c.fit}`}>{c.title}</Fit>
            <Badge n="0" className="mt-[2px] ml-[8px]" />
            <Oct name="pencil" vw={14} className="ml-auto h-[15px] w-[13px] text-[#586069]" />
            <Oct name="plus" vw={12} className="ml-[13px] h-[15px] w-3 text-[#586069]" />
          </div>
        </section>
      ))}
      <div className="flex h-[98px] w-[300px] shrink-0 items-center rounded-[3px] border border-dashed border-[#dfe2e5] pt-[2px] pl-[105px] text-[#586069]">
        <Oct name="plus" vw={12} className="h-[15px] w-3" />
        <Fit className="ml-[3px] w-[74px] text-[13px]">Add column</Fit>
      </div>
      <svg viewBox="0 0 9 20" className="absolute top-6 left-[64px] h-5 w-[9px]" fill="none" stroke="#222" strokeWidth="1.200">
        <path d="M1 1h2.500l1 1 1-1H8M4.500 2v16M1 19h2.500l1-1 1 1H8" />
      </svg>
    </div>
  );
}

function Taskbar() {
  return (
    <footer className="flex h-[13px] shrink-0 items-start overflow-hidden border-t border-[#39424e] bg-linear-to-r from-[#8496b0] from-0% via-[#a5bfdd] via-6% to-[#a5bfdd] to-83%">
      <div className="flex h-3 w-full items-start overflow-hidden border-t border-[#cfdcec] bg-linear-to-r from-transparent from-83% to-[#8093aa] to-86%">
        <svg viewBox="0 0 34 11" className="ml-[9px] h-[11px] w-[34px]">
          <circle cx="17" cy="18" r="16.500" fill="#5f88a8" stroke="#3b5068" />
          <path d="M4 9Q17-6 30 9z" fill="#b9cfdd" />
          <path d="M8 11q3-6 9-3v3z" fill="#e5542b" />
          <path d="M18 8q5 1 8-1l1 4h-9z" fill="#7fb23c" />
        </svg>
        <svg viewBox="0 0 32 8" className="mt-[3px] ml-[26px] h-2 w-8">
          <path d="M0 0h14l2 2h15v6H2z" fill="#ecd58b" />
          <path d="M4 1h3v2H4z" fill="#2fa84a" />
          <path d="M12 2h3v2h-3z" fill="#d8392b" />
          <path d="M20 4h4v1h-4z" fill="#3b8fd8" />
        </svg>
        <svg viewBox="0 0 28 9" className="mt-[2px] ml-[28px] h-[9px] w-7">
          <path d="M4 9Q8 0 15 0t13 9z" fill="#1c78b4" />
          <path d="M0 1l5 3 5 5H0zM18 2q8 2 10 7h-7z" fill="#ec7a1f" />
        </svg>
        <svg viewBox="0 0 28 9" className="mt-[2px] ml-8 h-[9px] w-7">
          <path d="M4 4q0-4 4-4h17q3 0 3 3v6H4z" fill="#3fa9c9" stroke="#246f8c" />
          <path d="M0 9q1-4 4-4h15q3 0 3 4z" fill="#f5b81f" />
        </svg>
        <svg viewBox="0 0 30 10" className="mt-px ml-[30px] h-[10px] w-[30px]">
          <path d="M0 10V3q0-3 3-3h27v10z" fill="#3fb1f2" />
          <circle cx="13" cy="11" r="5" fill="#fff" />
          <circle cx="22" cy="11" r="4" fill="#fff" />
          <circle cx="13" cy="10" r="1.500" fill="#3fb1f2" />
        </svg>
        <svg viewBox="0 0 26 10" className="mt-px ml-8 h-[10px] w-[26px]">
          <path d="M2 10Q6 2 13 2t9 8z" fill="#2aa7e6" />
          <path d="M4 9Q14-2 24 2q2 2-1 6" fill="none" stroke="#f0c24a" strokeWidth="2.200" />
        </svg>
        <svg viewBox="0 0 26 10" className="mt-px ml-[31px] h-[10px] w-[26px]">
          <path d="M0 2l6-1 5 2 5-2 9 0 1 9H1z" fill="#f4dc1c" stroke="#9c8a16" />
          <path d="M8 6l4 4M16 3l4 4-4 1" stroke="#51480c" strokeWidth="2" fill="none" />
        </svg>
        <div className="ml-[18px] flex h-3 w-[57px] justify-center rounded-t-[2px] border border-[#5a6b80] bg-linear-to-r from-[#eef2f6] to-[#b9cbe0]">
          <svg viewBox="0 0 26 8" className="mt-[3px] h-2 w-[26px]">
            <circle cx="13" cy="13" r="12.500" fill="#da4a3f" />
          </svg>
        </div>
        <div className="ml-auto flex items-start">
          <i className="mt-2 mr-4 h-3 w-[15px] rounded-t-[2px] border-2 border-b-0 border-[#12c61e] bg-[#d8f2d8]" />
          <i className="mt-[10px] mr-3 h-[2px] w-[13px] bg-[#262b33]" />
          <i className="mt-[10px] mr-[15px] h-[2px] w-[6px] bg-[#5c9a2f]" />
          <i className="mt-[10px] mr-[20px] h-[2px] w-[3px] bg-[#3c4654]" />
          <i className="mt-[10px] mr-[80px] h-[2px] w-[5px] bg-[#5a6677]" />
          <Fit className="mt-[2px] w-[30px] text-[12px] leading-[14px] text-white">09:25</Fit>
          <i className="mr-px ml-[39px] h-3 w-[13px] border border-[#46566c] bg-linear-to-br from-[#aebbc9] to-[#566a84]" />
        </div>
      </div>
    </footer>
  );
}

function RemoteScreen() {
  return (
    <main className="flex w-[1828px] shrink-0 flex-col font-['Open_Sans','Noto_Sans_CJK_SC',sans-serif]">
      <RemoteTabs />
      <Toolbar />
      <Bookmarks />
      <div className="flex min-h-0 flex-1">
        <div className="flex w-[1812px] shrink-0 flex-col bg-white">
          <GithubHeader />
          <RepoHead />
          <ProjectBar />
          <Board />
          <div className="ml-[31px] flex h-[13px] shrink-0 items-center bg-[#f1f1f1]">
            <i className="ml-[5px] border-y-[4px] border-r-[4px] border-y-transparent border-r-[#a3a3a3]" />
            <i className="mt-[2px] ml-[7px] h-[11px] w-[1654px] bg-[#c1c1c1]" />
            <i className="mr-[7px] ml-auto border-y-[4px] border-l-[4px] border-y-transparent border-l-[#505050]" />
          </div>
        </div>
        <div className="flex w-4 shrink-0 flex-col items-center bg-[#f1f1f1]">
          <i className="mt-[7px] border-x-[4px] border-b-[4px] border-x-transparent border-b-[#a3a3a3]" />
          <i className="mt-[5px] h-[869px] w-3 bg-[#c1c1c1]" />
          <i className="mt-2 border-x-[4px] border-t-[4px] border-x-transparent border-t-[#505050]" />
        </div>
      </div>
      <Taskbar />
    </main>
  );
}

export default function App() {
  return (
    <div className="flex h-[1080px] w-[1920px] flex-col overflow-hidden bg-black font-['Noto_Sans','Noto_Sans_CJK_SC',sans-serif]">
      <TopPanel />
      <div className="flex min-h-0 flex-1">
        <Launcher />
        <div className="flex w-[6px] shrink-0 flex-col">
          <i className="h-7 bg-[#383733]" />
          <i className="h-[37px] border-b border-[#999] bg-[#cfcfcf]" />
          <i className="h-[54px] bg-[#1d2125]" />
          <i className="h-[104px] border-b border-[#9a9a9a] bg-[#c3c3c3]" />
          <i className="flex-1 bg-linear-to-r from-[#c6c6c6] to-[#a2a2a2]" />
        </div>
        <div className="flex min-w-0 flex-1 flex-col">
          <HostTabs />
          <VncTitle />
          <div className="flex min-h-0 flex-1 pl-[10px]">
            <RemoteScreen />
          </div>
        </div>
      </div>
    </div>
  );
}
